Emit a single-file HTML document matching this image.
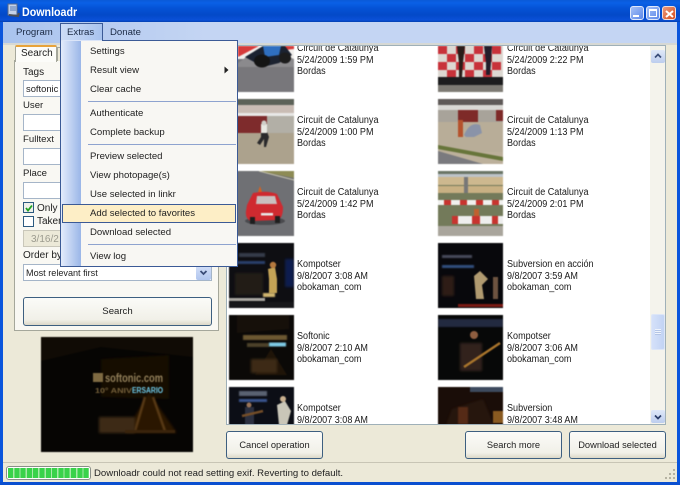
<!DOCTYPE html>
<html><head><meta charset="utf-8"><title>Downloadr</title>
<style>
html,body{margin:0;padding:0}
body{width:680px;height:485px;overflow:hidden;position:relative;background:#ece9d8;font-family:"Liberation Sans",sans-serif;font-size:9.6px;color:#111}
div,span{position:absolute;box-sizing:border-box;white-space:nowrap}
svg{position:absolute;display:block}
.inp{background:#fff;border:1px solid #a5b5c8}
.btn{background:linear-gradient(#fbfbf8,#f1f0e8 80%,#dcd8c8);border:1px solid #3d5f80;border-radius:3px;text-align:center;line-height:27px;color:#222;font-size:9.3px}
.t{line-height:11.6px;font-size:10px;color:#1a1a1a;white-space:pre;transform:scaleX(.905);transform-origin:0 0}
.mi{left:90px;line-height:12px;height:12px;font-size:9.6px;color:#222}
.sep{left:88px;width:148px;height:1px;background:#8ea3cf}
.th{filter:blur(.45px)}
</style></head><body>
<!-- title bar -->
<div style="left:0;top:0;width:680px;height:22px;background:linear-gradient(#0a5ad8 0,#0a60e6 3px,#0553d6 8px,#0349c8 15px,#0a50d8 20px,#0340b0)"></div>
<svg style="left:6px;top:3px" width="14" height="15" viewBox="0 0 14 15"><rect x="2" y="1" width="9" height="11" fill="#c5d2e8" stroke="#56688a"/><rect x="4" y="3" width="6" height="5" fill="#8ea6ce"/><path d="M3 12 L12 13 L13 10" fill="none" stroke="#4b4f58" stroke-width="2"/></svg>
<div style="left:22px;top:5px;line-height:14px;font-size:12px;font-weight:bold;color:#fff;transform:scaleX(.89);transform-origin:0 0">Downloadr</div>
<!-- window buttons -->
<div style="left:630px;top:6px;width:14px;height:14px;border:1px solid #dfe8fb;border-radius:3px;background:linear-gradient(135deg,#a4c0f6,#5c88ea)"><span style="left:2px;top:8px;width:6px;height:2px;background:#fff"></span></div>
<div style="left:646px;top:6px;width:14px;height:14px;border:1px solid #dfe8fb;border-radius:3px;background:linear-gradient(135deg,#a4c0f6,#5c88ea)"><span style="left:2px;top:2px;width:8px;height:8px;border:1px solid #fff;border-top-width:2px"></span></div>
<div style="left:662px;top:6px;width:14px;height:14px;border:1px solid #f2dcd6;border-radius:3px;background:linear-gradient(135deg,#eb9a7c,#d64c1c)"><svg style="left:2px;top:3px" width="9" height="8"><path d="M1 1 L8 7 M8 1 L1 7" stroke="#fff" stroke-width="2"/></svg></div>
<!-- side borders -->
<div style="left:0;top:22px;width:3px;height:463px;background:#0a55dc"></div>
<div style="left:677px;top:22px;width:3px;height:463px;background:#0a55dc"></div>
<div style="left:0;top:482px;width:680px;height:3px;background:#0a4fd0"></div>
<!-- menu bar -->
<div style="left:3px;top:22px;width:674px;height:21px;background:linear-gradient(90deg,#a9c3ee,#c4d5f3 30%,#c4d5f3)"></div>
<div style="left:3px;top:43px;width:674px;height:2px;background:#d6d8d4"></div>
<div class="mi" style="left:16px;top:27px;color:#1b2a44">Program</div>
<div style="left:60px;top:23px;width:43px;height:18px;border:1px solid #3b5a96;border-bottom:0;background:linear-gradient(90deg,#cdddf6,#a8c3ee)"></div>
<div class="mi" style="left:67px;top:27px;color:#1b2a44">Extras</div>
<div class="mi" style="left:110px;top:27px;color:#1b2a44">Donate</div>

<!-- results panel -->
<div id="res" style="left:226px;top:45px;width:440px;height:380px;background:#fff;border:1px solid #9fb0b8;overflow:hidden">
<svg width="0" height="0" style="position:absolute"><defs>
<filter id="b"><feGaussianBlur stdDeviation=".6"/></filter>
<filter id="b2"><feGaussianBlur stdDeviation="1.4"/></filter>
<g id="moto"><rect width="65" height="65" fill="#77767a"/><rect width="65" height="32" fill="#f1efec"/><path d="M9 19H30L9 30Z" fill="#d63b3a"/><path d="M40 19H65V22L45 24Z" fill="#d63b3a"/><rect y="38" width="65" height="27" fill="#78777b"/><path d="M9 36L20 28 50 26 65 32V40H9Z" fill="#8b8a8d"/><path d="M16 30L34 19H56L63 28 50 36 34 40Z" fill="#1b2230"/><path d="M34 19H52L50 28 36 30Z" fill="#2f6fc0"/><ellipse cx="33" cy="34" rx="8" ry="6.5" fill="#141414"/><ellipse cx="56" cy="31" rx="6" ry="5.5" fill="#1c1c1c"/></g>
<g id="fall"><rect width="65" height="65" fill="#aca28d"/><rect width="65" height="6" fill="#5c6258"/><rect y="6" width="65" height="8" fill="#c9bcb4"/><rect y="14" width="65" height="3" fill="#e8e8e6"/><rect y="17" width="38" height="17" fill="#7e2b2c"/><rect x="38" y="17" width="27" height="17" fill="#b2afa6"/><path d="M32 30L37 30 40 38 37 48 35 48 35 40 31 46 28 44 32 38Z" fill="#2a2a2c"/><rect x="32" y="25" width="6" height="9" fill="#e8e8e2"/><circle cx="35" cy="24" r="2.5" fill="#cfcfc9"/></g>
<g id="car"><rect width="65" height="65" fill="#6f7074"/><path d="M30 0H65V7Z" fill="#8d8b55"/><path d="M30 0L65 9" stroke="#c9c6b0" stroke-width="1"/><ellipse cx="36" cy="50" rx="20" ry="4" fill="#4a4a4e"/><path d="M18 34 L24 22 Q38 19 48 23 L54 36 Q54 48 48 49 L22 50 Q16 48 17 40Z" fill="#cf2a30"/><path d="M28 25 L46 25 L48 33 L27 33Z" fill="#c9c0bf"/><rect x="32" y="42" width="12" height="2.5" fill="#e8e8e8"/><rect x="21" y="46" width="5" height="7" fill="#1e1e1e"/><rect x="46" y="45" width="5" height="7" fill="#1e1e1e"/><path d="M31 15l2 6h-4z" fill="#d8601f"/></g>
<g id="conc"><rect width="65" height="65" fill="#0e0e12"/><rect x="56" y="16" width="9" height="28" fill="#101c50" filter="url(#b2)"/><rect x="10" y="10" width="26" height="4" fill="#343a48" filter="url(#b)"/><rect x="8" y="18" width="28" height="3" fill="#2a3f6c" filter="url(#b)"/><path d="M39 26L46 24 48 36 48 50 40 50 40 36Z" fill="#c4a356"/><circle cx="44" cy="22" r="3.2" fill="#b5793e"/><rect x="6" y="30" width="28" height="22" fill="#241c16" filter="url(#b2)"/><rect y="55" width="36" height="3" fill="#a9a6a0"/><rect x="34" y="50" width="12" height="4" fill="#d2b670" filter="url(#b)"/><rect y="59" width="65" height="6" fill="#17171a"/></g>
<g id="soft"><rect width="65" height="65" fill="#0b0907"/><path d="M8 0H60V14L8 18Z" fill="#16100a"/><path d="M42 34 L58 60 H26Z" fill="#1f1408"/><rect x="14" y="20" width="44" height="5" fill="#6c5830" filter="url(#b)"/><rect x="18" y="28" width="22" height="4" fill="#4e422c" filter="url(#b)"/><rect x="40" y="27.5" width="17" height="4" fill="#7fcbe6" filter="url(#b)"/><rect x="22" y="44" width="26" height="14" fill="#3e2c14" filter="url(#b2)"/></g>
<g id="duo"><rect width="65" height="65" fill="#0c0e16"/><rect x="10" y="4" width="28" height="5" fill="#5a6272" filter="url(#b)"/><rect x="10" y="12" width="28" height="3" fill="#3a5590" filter="url(#b)"/><path d="M48 18L56 14 62 24 58 38H50Z" fill="#c9c6b8"/><circle cx="54" cy="12" r="3" fill="#c9b090"/><rect x="16" y="20" width="9" height="18" fill="#2c3040"/><circle cx="20" cy="18" r="2.5" fill="#9a7458"/><path d="M13 29L34 24" stroke="#734d28" stroke-width="2.5"/></g>
<g id="pod"><rect width="65" height="65" fill="#dcd8d2"/><g fill="#c8323a"><rect x="0" y="19" width="9" height="8"/><rect x="18" y="19" width="9" height="8"/><rect x="36" y="19" width="9" height="8"/><rect x="54" y="19" width="9" height="8"/><rect x="9" y="27" width="9" height="8"/><rect x="27" y="27" width="9" height="8"/><rect x="45" y="27" width="9" height="8"/><rect x="0" y="35" width="9" height="8"/><rect x="18" y="35" width="9" height="8"/><rect x="36" y="35" width="9" height="8"/><rect x="54" y="35" width="9" height="8"/><rect x="9" y="43" width="9" height="7"/><rect x="27" y="43" width="9" height="7"/><rect x="45" y="43" width="9" height="7"/></g><path d="M19 19H27L25 36 24 50H21L21 36Z" fill="#2a1c18"/><path d="M46 19H54L53 36 52 48H48L48 36Z" fill="#231d2a"/><rect y="50" width="65" height="8" fill="#1c1c1e"/><rect y="58" width="65" height="7" fill="#7d7a74"/></g>
<g id="crash"><rect width="65" height="65" fill="#bcb09b"/><rect width="65" height="6" fill="#5f5a58"/><rect y="6" width="65" height="5" fill="#d9d8d4"/><rect y="11" width="65" height="12" fill="#a8a39a"/><rect x="20" y="11" width="20" height="12" fill="#7e2a28"/><rect x="58" y="11" width="7" height="11" fill="#7e2a28"/><rect y="23" width="65" height="30" fill="#b8ad98"/><rect x="20" y="21" width="5" height="17" fill="#b5522c"/><path d="M26 36Q32 22 42 26L44 34 36 38 28 38Z" fill="#8a93a8"/><path d="M0 50L65 62V58L0 46Z" fill="#67753a"/><path d="M0 52L45 65H0Z" fill="#7a7a7e"/></g>
<g id="stand"><rect width="65" height="65" fill="#737a5a"/><rect width="65" height="3" fill="#6a7566"/><rect y="3" width="65" height="3" fill="#bcc3c8"/><rect y="6" width="65" height="8" fill="#cdb88f"/><rect y="15" width="65" height="7" fill="#c8b083"/><rect x="26" y="6" width="4" height="16" fill="#777"/><rect y="29" width="65" height="5" fill="#f0f0ee"/><g fill="#c8342f"><rect x="6" y="29" width="7" height="5"/><rect x="22" y="29" width="7" height="5"/><rect x="38" y="29" width="7" height="5"/><rect x="54" y="29" width="7" height="5"/></g><rect x="14" y="45" width="51" height="8" fill="#eee"/><rect x="14" y="45" width="6" height="8" fill="#c8342f"/><rect x="34" y="45" width="8" height="8" fill="#c8342f"/><rect x="54" y="45" width="6" height="8" fill="#c8342f"/><rect x="36" y="38" width="5" height="7" fill="#c0602f"/><rect y="55" width="65" height="10" fill="#a9a59c"/></g>
<g id="sub"><rect width="65" height="65" fill="#08080c"/><rect x="4" y="12" width="30" height="3" fill="#464c5c" filter="url(#b)"/><rect x="4" y="22" width="32" height="3" fill="#33507f" filter="url(#b)"/><path d="M36 33L42 28 50 36 44 42 46 56 38 56Z" fill="#b09a70"/><rect x="55" y="34" width="5" height="22" fill="#6d5340"/><rect x="4" y="33" width="12" height="20" fill="#2f1c14" filter="url(#b2)"/><rect x="20" y="61" width="45" height="3" fill="#7a1a14"/></g>
<g id="guit"><rect width="65" height="65" fill="#070808"/><rect x="0" y="4" width="65" height="8" fill="#232c40" filter="url(#b)"/><rect x="22" y="28" width="22" height="28" fill="#33241e" filter="url(#b2)"/><circle cx="36" cy="20" r="4" fill="#8f5e40"/><path d="M26 52L62 28" stroke="#a8742c" stroke-width="2.5"/></g>
<g id="sub2"><rect width="65" height="65" fill="#1a0d08"/><rect x="32" y="0" width="33" height="5" fill="#3d4a5e"/><path d="M14 22L45 12 65 60H0Z" fill="#28160a" filter="url(#b2)"/><rect x="20" y="20" width="10" height="17" fill="#542c16" filter="url(#b)"/><rect x="55" y="24" width="10" height="12" fill="#8a5a20"/></g>
</defs></svg>

<svg class="th" style="left:2px;top:-19px" width="65" height="65"><use href="#moto"/></svg>
<svg class="th" style="left:211px;top:-19px" width="65" height="65"><use href="#pod"/></svg>
<svg class="th" style="left:2px;top:53px" width="65" height="65"><use href="#fall"/></svg>
<svg class="th" style="left:211px;top:53px" width="65" height="65"><use href="#crash"/></svg>
<svg class="th" style="left:2px;top:125px" width="65" height="65"><use href="#car"/></svg>
<svg class="th" style="left:211px;top:125px" width="65" height="65"><use href="#stand"/></svg>
<svg class="th" style="left:2px;top:197px" width="65" height="65"><use href="#conc"/></svg>
<svg class="th" style="left:211px;top:197px" width="65" height="65"><use href="#sub"/></svg>
<svg class="th" style="left:2px;top:269px" width="65" height="65"><use href="#soft"/></svg>
<svg class="th" style="left:211px;top:269px" width="65" height="65"><use href="#guit"/></svg>
<svg class="th" style="left:2px;top:341px" width="65" height="65"><use href="#duo"/></svg>
<svg class="th" style="left:211px;top:341px" width="65" height="65"><use href="#sub2"/></svg>

<div class="t" style="left:70px;top:-3px">Circuit de Catalunya
5/24/2009 1:59 PM
Bordas</div>
<div class="t" style="left:280px;top:-3px">Circuit de Catalunya
5/24/2009 2:22 PM
Bordas</div>
<div class="t" style="left:70px;top:69px">Circuit de Catalunya
5/24/2009 1:00 PM
Bordas</div>
<div class="t" style="left:280px;top:69px">Circuit de Catalunya
5/24/2009 1:13 PM
Bordas</div>
<div class="t" style="left:70px;top:141px">Circuit de Catalunya
5/24/2009 1:42 PM
Bordas</div>
<div class="t" style="left:280px;top:141px">Circuit de Catalunya
5/24/2009 2:01 PM
Bordas</div>
<div class="t" style="left:70px;top:213px">Kompotser
9/8/2007 3:08 AM
obokaman_com</div>
<div class="t" style="left:280px;top:213px">Subversion en acción
9/8/2007 3:59 AM
obokaman_com</div>
<div class="t" style="left:70px;top:285px">Softonic
9/8/2007 2:10 AM
obokaman_com</div>
<div class="t" style="left:280px;top:285px">Kompotser
9/8/2007 3:06 AM
obokaman_com</div>
<div class="t" style="left:70px;top:357px">Kompotser
9/8/2007 3:08 AM
obokaman_com</div>
<div class="t" style="left:280px;top:357px">Subversion
9/8/2007 3:48 AM
obokaman_com</div>

<!-- scrollbar -->
<div style="left:423px;top:0;width:16px;height:378px;background:#f4f3ec"></div>
<div style="left:424px;top:4px;width:14px;height:13px;background:linear-gradient(#dfe8f8,#bccdee);border-radius:2px"><svg style="left:3px;top:3px" width="8" height="6"><path d="M1 4.5L4 1.5 7 4.5" fill="none" stroke="#3a4d78" stroke-width="1.7"/></svg></div>
<div style="left:424px;top:268px;width:14px;height:36px;background:linear-gradient(90deg,#d5e1f9,#c2d3f4);border:1px solid #dde6f7;border-radius:2px"><span style="left:3px;top:14px;width:6px;height:6px;background:repeating-linear-gradient(#eef3fc 0 1px,#b4c5e6 1px 2px)"></span></div>
<div style="left:424px;top:364px;width:14px;height:13px;background:linear-gradient(#dfe8f8,#bccdee);border-radius:2px"><svg style="left:3px;top:4px" width="8" height="6"><path d="M1 1.5L4 4.5 7 1.5" fill="none" stroke="#2a3d68" stroke-width="1.7"/></svg></div>
</div>

<!-- left panel -->
<div style="left:14px;top:60px;width:205px;height:271px;background:#f9f8f3;border:1px solid #a5a79b"></div>
<div style="left:57px;top:47px;width:4px;height:14px;background:#ece9d8;border-left:1px solid #a5a79b;border-top:1px solid #a5a79b"></div>
<div style="left:15px;top:45px;width:42px;height:17px;background:#fcfcf9;border:1px solid #a5a79b;border-bottom:0;border-top:2px solid #e8a33a;border-radius:2px 2px 0 0"></div>
<div class="mi" style="left:21px;top:48px;font-size:10px">Search</div>
<div class="mi" style="left:23px;top:67px;font-size:10px">Tags</div>
<div class="inp" style="left:23px;top:80px;width:60px;height:17px"></div>
<div class="mi" style="left:26px;top:83px;font-size:9.4px">softonic</div>
<div class="mi" style="left:23px;top:100px">User</div>
<div class="inp" style="left:23px;top:114px;width:60px;height:17px"></div>
<div class="mi" style="left:23px;top:134px">Fulltext</div>
<div class="inp" style="left:23px;top:148px;width:60px;height:17px"></div>
<div class="mi" style="left:23px;top:168px">Place</div>
<div class="inp" style="left:23px;top:182px;width:60px;height:17px"></div>
<div style="left:23px;top:202px;width:11px;height:11px;background:#eef0ea;border:1px solid #2c5a80"><svg style="left:1px;top:1px" width="8" height="8"><path d="M1 4L3 6.5 7 1.5" fill="none" stroke="#21a121" stroke-width="1.8"/></svg></div>
<div class="mi" style="left:37px;top:203px;font-size:10px">Only (</div>
<div style="left:23px;top:216px;width:11px;height:11px;background:#fff;border:1px solid #2c5a80"></div>
<div class="mi" style="left:37px;top:216px;font-size:10px">Taken</div>
<div style="left:23px;top:230px;width:60px;height:17px;background:#ece9d8;border:1px solid #c9c7ba"></div>
<div class="mi" style="left:31px;top:234px;color:#9b9a8e;font-size:10px">3/16/2</div>
<div class="mi" style="left:23px;top:250px;font-size:10px">Order by</div>
<div class="inp" style="left:23px;top:264px;width:189px;height:17px"></div>
<div class="mi" style="left:26px;top:267px;font-size:9.1px">Most relevant first</div>
<div style="left:196px;top:265px;width:15px;height:15px;background:linear-gradient(#d5e1f8,#b0c5ee);border-radius:2px"><svg style="left:3px;top:5px" width="9" height="6"><path d="M1.5 1L4.5 4 7.5 1" fill="none" stroke="#3a4d78" stroke-width="1.8"/></svg></div>
<div class="btn" style="left:23px;top:297px;width:189px;height:29px;border-width:1.5px;line-height:27px;font-size:9.6px">Search</div>

<!-- preview image -->
<svg class="th" style="left:41px;top:337px" width="152" height="115" viewBox="0 0 152 115"><rect width="152" height="115" fill="#060503"/><path d="M0 0H152V20L60 10 0 24Z" fill="#100b05"/><path d="M60 22L128 18V62L60 60Z" fill="#140d06" filter="url(#b2)"/><path d="M108 56L136 96H84Z" fill="#2a1906" filter="url(#b2)"/><path d="M112 60L124 94M104 60L94 94" stroke="#5a3a12" stroke-width="2.5" filter="url(#b)"/><rect x="58" y="80" width="36" height="16" fill="#3e2a12" filter="url(#b2)"/><rect x="84" y="93" width="50" height="3" fill="#3a240c"/><rect x="52" y="36" width="10" height="9" fill="#7e6a42"/><text x="64" y="45" font-size="12" font-weight="bold" fill="#93805a" font-family="Liberation Sans" textLength="58" lengthAdjust="spacingAndGlyphs">softonic.com</text><text x="54" y="56" font-size="7.5" font-weight="bold" fill="#75603a" font-family="Liberation Sans" textLength="37" lengthAdjust="spacingAndGlyphs">10° ANIV</text><text x="91" y="56" font-size="8" font-weight="bold" fill="#6fcbea" font-family="Liberation Sans" textLength="31" lengthAdjust="spacingAndGlyphs">ERSARIO</text></svg>

<!-- bottom buttons -->
<div class="btn" style="left:226px;top:431px;width:97px;height:28px">Cancel operation</div>
<div class="btn" style="left:465px;top:431px;width:97px;height:28px">Search more</div>
<div class="btn" style="left:569px;top:431px;width:97px;height:28px">Download selected</div>

<!-- status bar -->
<div style="left:3px;top:462px;width:674px;height:1px;background:#c8c5b5"></div>
<div style="left:6px;top:466px;width:85px;height:14px;background:#fff;border:1px solid #8a8f88;border-radius:3px;padding:0"></div>
<div style="left:8px;top:468px;width:81px;height:10px;background:repeating-linear-gradient(90deg,#39d24a 0 5px,#a8eaa8 5px 6.3px)"></div>
<div class="mi" style="left:94px;top:467px;font-size:9.6px;line-height:13px">Downloadr could not read setting exif. Reverting to default.</div>
<svg style="left:664px;top:468px" width="12" height="12"><g fill="#b5b2a2"><rect x="9" y="1" width="2" height="2"/><rect x="5" y="5" width="2" height="2"/><rect x="9" y="5" width="2" height="2"/><rect x="1" y="9" width="2" height="2"/><rect x="5" y="9" width="2" height="2"/><rect x="9" y="9" width="2" height="2"/></g></svg>

<!-- menu -->
<div style="left:60px;top:40px;width:178px;height:227px;background:#f8f7f3;border:1px solid #3b5a96"></div>
<div style="left:61px;top:41px;width:20px;height:225px;background:linear-gradient(90deg,#e4ecfb,#9ab6e8)"></div>
<div style="left:61px;top:40px;width:41px;height:1px;background:#dbe5f8"></div>
<div class="mi" style="top:46px">Settings</div>
<div class="mi" style="top:65px">Result view</div>
<svg style="left:224px;top:66px" width="5" height="8"><path d="M0.5 0.5L4.5 4 0.5 7.5Z" fill="#222"/></svg>
<div class="mi" style="top:84px">Clear cache</div>
<div class="sep" style="top:101px"></div>
<div class="mi" style="top:108px">Authenticate</div>
<div class="mi" style="top:127px">Complete backup</div>
<div class="sep" style="top:144px"></div>
<div class="mi" style="top:151px">Preview selected</div>
<div class="mi" style="top:170px">View photopage(s)</div>
<div class="mi" style="top:189px">Use selected in linkr</div>
<div style="left:62px;top:204px;width:174px;height:19px;background:#fdeec6;border:1px solid #3b5a96"></div>
<div class="mi" style="top:208px">Add selected to favorites</div>
<div class="mi" style="top:227px">Download selected</div>
<div class="sep" style="top:244px"></div>
<div class="mi" style="top:251px">View log</div>
</body></html>
